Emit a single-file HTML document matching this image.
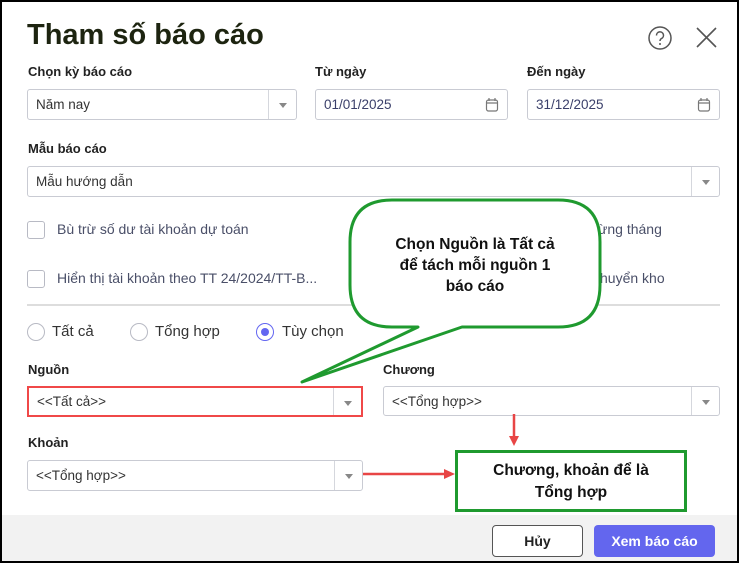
<!DOCTYPE html>
<html><head><meta charset="utf-8"><style>
*{margin:0;padding:0;box-sizing:border-box}
body{width:739px;height:563px;overflow:hidden;background:#fff;font-family:"Liberation Sans",sans-serif;position:relative}
.frame{position:absolute;left:0;top:0;width:739px;height:563px;border:2px solid #000;}
.a{position:absolute}
.lbl{position:absolute;font-size:13px;font-weight:bold;color:#222}
.inp{position:absolute;border:1px solid #c9cbd3;border-radius:3px;background:#fff;font-size:13.5px;color:#333;padding-left:8px;display:flex;align-items:center}
.dd{position:absolute;top:0;bottom:0;right:0;width:28px;border-left:1px solid #d5d7dd}
.dd:after{content:"";position:absolute;left:10px;top:13px;border-left:4px solid transparent;border-right:4px solid transparent;border-top:5px solid #888}
.cb{position:absolute;width:18px;height:18px;border:1px solid #b8bac4;border-radius:3px}
.ct{position:absolute;font-size:14px;color:#4a4f68}
.rd{position:absolute;width:18px;height:18px;border:1px solid #b8bac4;border-radius:50%}
</style></head><body>
<div class="a" style="left:0;top:515px;width:739px;height:48px;background:#f2f2f2"></div>
<div class="a" style="left:27px;top:19px;font-size:29px;font-weight:bold;color:#1d2410">Tham số báo cáo</div>
<svg class="a" style="left:646px;top:24px" width="80" height="30">
<circle cx="14" cy="14" r="11" fill="none" stroke="#555" stroke-width="1.5"/>
<path d="M10.5 11.5a3.5 3.5 0 1 1 5 3c-1 .6-1.5 1.2-1.5 2.5" fill="none" stroke="#555" stroke-width="1.5"/>
<circle cx="14" cy="20" r="1" fill="#555"/>
<path d="M51 4L70 23M70 4L51 23" stroke="#555" stroke-width="1.6"/>
</svg>
<div class="lbl" style="left:28px;top:64px">Chọn kỳ báo cáo</div>
<div class="lbl" style="left:315px;top:64px">Từ ngày</div>
<div class="lbl" style="left:527px;top:64px">Đến ngày</div>
<div class="inp" style="left:27px;top:89px;width:270px;height:31px">Năm nay<div class="dd"></div></div>
<div class="inp" style="left:315px;top:89px;width:193px;height:31px;color:#3a3f6a">01/01/2025
<svg class="a" style="right:8px;top:7px" width="14" height="16"><rect x="1.5" y="3" width="11" height="11" rx="2" fill="none" stroke="#777" stroke-width="1.2"/><path d="M4 1v3M10 1v3M1.5 6h11" stroke="#777" stroke-width="1.2"/></svg></div>
<div class="inp" style="left:527px;top:89px;width:193px;height:31px;color:#3a3f6a">31/12/2025
<svg class="a" style="right:8px;top:7px" width="14" height="16"><rect x="1.5" y="3" width="11" height="11" rx="2" fill="none" stroke="#777" stroke-width="1.2"/><path d="M4 1v3M10 1v3M1.5 6h11" stroke="#777" stroke-width="1.2"/></svg></div>
<div class="lbl" style="left:28px;top:141px">Mẫu báo cáo</div>
<div class="inp" style="left:27px;top:166px;width:693px;height:31px">Mẫu hướng dẫn<div class="dd"></div></div>
<div class="cb" style="left:27px;top:221px"></div>
<div class="ct" style="left:57px;top:221px">Bù trừ số dư tài khoản dự toán</div>
<div class="ct" style="left:598px;top:221px">ừng tháng</div>
<div class="cb" style="left:27px;top:270px"></div>
<div class="ct" style="left:57px;top:270px">Hiển thị tài khoản theo TT 24/2024/TT-B...</div>
<div class="ct" style="left:600px;top:270px">huyển kho</div>
<div class="a" style="left:27px;top:304px;width:693px;height:2px;background:#ddd"></div>
<div class="rd" style="left:27px;top:323px"></div>
<div class="ct" style="left:52px;top:323px;font-size:15px;color:#333">Tất cả</div>
<div class="rd" style="left:130px;top:323px"></div>
<div class="ct" style="left:155px;top:323px;font-size:15px;color:#333">Tổng hợp</div>
<div class="rd" style="left:256px;top:323px;border-color:#6366f1"><div class="a" style="left:4px;top:4px;width:8px;height:8px;border-radius:50%;background:#6366f1"></div></div>
<div class="ct" style="left:282px;top:323px;font-size:15px;color:#333">Tùy chọn</div>
<div class="lbl" style="left:28px;top:362px">Nguồn</div>
<div class="lbl" style="left:383px;top:362px">Chương</div>
<div class="inp" style="left:27px;top:386px;width:336px;height:31px;border:2px solid #f04848;border-radius:0">&lt;&lt;Tất cả&gt;&gt;<div class="dd"></div></div>
<div class="inp" style="left:383px;top:386px;width:337px;height:30px">&lt;&lt;Tổng hợp&gt;&gt;<div class="dd"></div></div>
<div class="lbl" style="left:28px;top:435px">Khoản</div>
<div class="inp" style="left:27px;top:460px;width:336px;height:31px">&lt;&lt;Tổng hợp&gt;&gt;<div class="dd"></div></div>
<svg class="a" style="left:0;top:0" width="739" height="563">
<path d="M392 200H558Q600 200 600 242V285Q600 327 558 327H462L302 382L418 327H392Q350 327 350 285V242Q350 200 392 200Z" fill="#fff" stroke="#1f9a2f" stroke-width="3" stroke-linejoin="round"/>
<path d="M514 414V438" stroke="#e84545" stroke-width="2.5"/><path d="M509 436L514 446L519 436Z" fill="#e84545"/>
<path d="M363 474H446" stroke="#e84545" stroke-width="2.5"/><path d="M444 469L455 474L444 479Z" fill="#e84545"/>
</svg>
<div class="a" style="left:350px;top:234px;width:250px;text-align:center;font-size:15.5px;font-weight:bold;line-height:21px;color:#111">Chọn Nguồn là Tất cả<br>để tách mỗi nguồn 1<br>báo cáo</div>
<div class="a" style="left:455px;top:450px;width:232px;height:62px;border:3px solid #1f9a2f;background:#fff;text-align:center;font-size:15.5px;font-weight:bold;line-height:22px;color:#111;padding-top:7px">Chương, khoản để là<br>Tổng hợp</div>
<div class="a" style="left:492px;top:525px;width:91px;height:32px;border:1px solid #555;border-radius:4px;background:#fff;font-size:14px;font-weight:bold;color:#222;text-align:center;line-height:30px">Hủy</div>
<div class="a" style="left:594px;top:525px;width:121px;height:32px;border-radius:4px;background:#6366ee;font-size:14px;font-weight:bold;color:#fff;text-align:center;line-height:32px">Xem báo cáo</div>
<div class="frame"></div>
</body></html>
